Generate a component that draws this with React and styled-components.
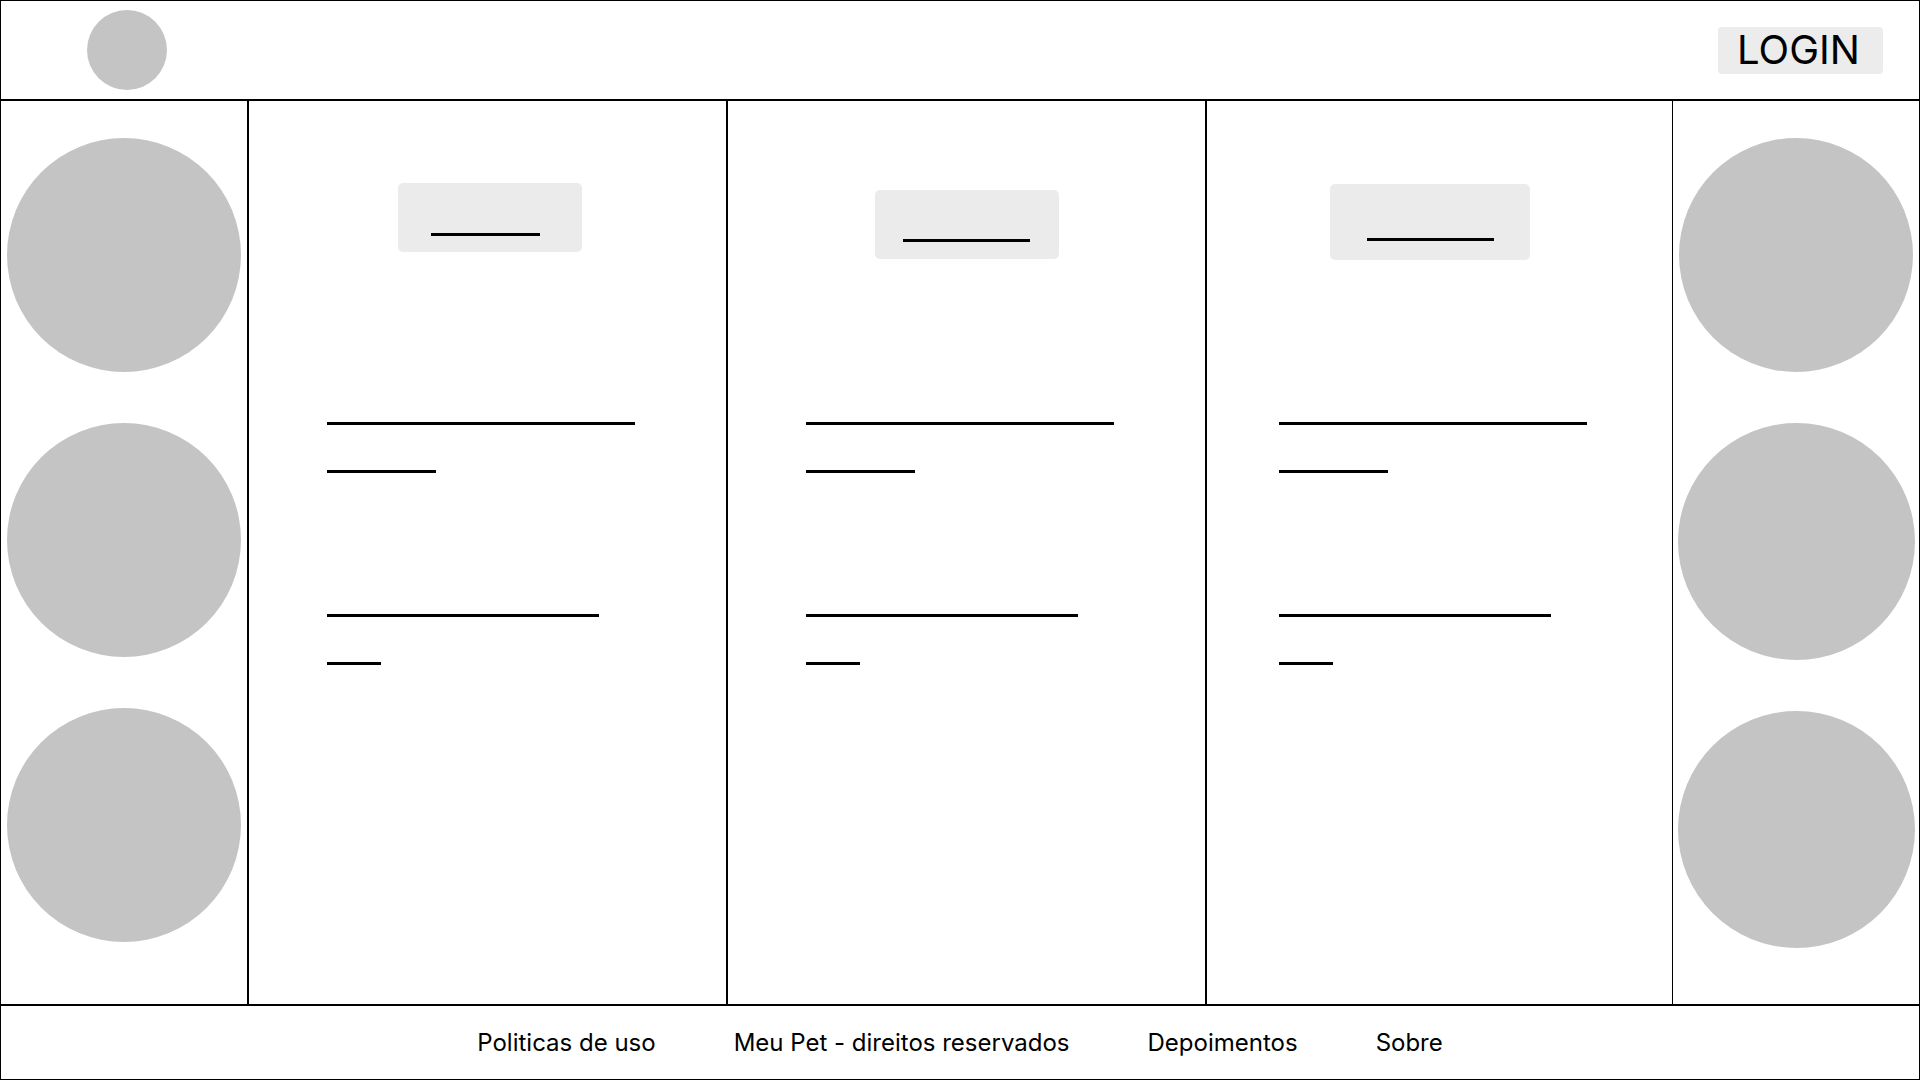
import React from "react";
import styled, { createGlobalStyle } from "styled-components";

const Global = createGlobalStyle`
  * { box-sizing: border-box; }
  html, body { margin: 0; padding: 0; background: #ffffff; }
  body { font-family: Inter, "Noto Sans", sans-serif; color: #000; }
`;

const Page = styled.div`
  width: 1920px;
  height: 1080px;
  border: 1px solid #000;
  display: flex;
  flex-direction: column;
  background: #fff;
`;

const Header = styled.header`
  height: 100px;
  flex: none;
  border-bottom: 2px solid #000;
  display: flex;
  align-items: center;
  justify-content: space-between;
  padding: 0 36px 0 86px;
`;

const Logo = styled.div`
  width: 80px;
  height: 80px;
  border-radius: 50%;
  background: #c4c4c4;
`;

const LoginButton = styled.button`
  width: 165px;
  height: 47px;
  border: none;
  border-radius: 4px;
  background: #ececec;
  font-family: Inter, sans-serif;
  font-size: 40px;
  font-weight: 400;
  color: #000;
  display: flex;
  align-items: center;
  justify-content: center;
  padding: 0 4px 0 0;
  line-height: 1;
`;

const Main = styled.main`
  flex: 1;
  display: grid;
  grid-template-columns: 248px 479px 479px 466px 1fr;
  min-height: 0;
`;

const Side = styled.aside`
  display: flex;
  flex-direction: column;
  align-items: center;
  gap: 51px;
  padding-top: 37px;
  border-right: ${(p) => (p.$last ? "none" : "2px solid #000")};
`;

const Bubble = styled.div`
  width: ${(p) => p.$size}px;
  height: ${(p) => p.$size}px;
  border-radius: 50%;
  background: #c4c4c4;
  flex: none;
`;

const Card = styled.section`
  display: flex;
  flex-direction: column;
  border-right: ${(p) => p.$border}px solid #000;
`;

const ButtonArea = styled.div`
  height: 321px;
  flex: none;
`;

const CardButton = styled.div`
  margin-top: ${(p) => p.$top}px;
  margin-left: ${(p) => p.$left}px;
  width: ${(p) => p.$w}px;
  height: ${(p) => p.$h}px;
  background: #ebebeb;
  border-radius: 5px;
  padding-top: ${(p) => p.$lineTop}px;
  padding-left: ${(p) => p.$lineLeft}px;
`;

const ButtonLabel = styled.div`
  width: ${(p) => p.$w}px;
  height: 3px;
  background: #000;
`;

const Lines = styled.div`
  display: flex;
  flex-direction: column;
  gap: 45px;
  padding-left: ${(p) => p.$left}px;
  margin-top: ${(p) => p.$mt || 0}px;
`;

const Line = styled.div`
  width: ${(p) => p.$w}px;
  height: 3px;
  background: #000;
`;

const Footer = styled.footer`
  height: 75px;
  flex: none;
  border-top: 2px solid #000;
  display: flex;
  align-items: center;
  justify-content: center;
  gap: 78px;
`;

const FooterLink = styled.span`
  font-family: Inter, sans-serif;
  font-size: 24px;
  font-weight: 400;
  color: #000;
  white-space: nowrap;
`;

const cards = [
  { border: 2, top: 82, left: 149, w: 184, h: 69, lineTop: 50, lineLeft: 33, lineW: 109, textLeft: 78 },
  { border: 2, top: 89, left: 147, w: 184, h: 69, lineTop: 49, lineLeft: 28, lineW: 127, textLeft: 78 },
  { border: 1, top: 83, left: 123, w: 200, h: 76, lineTop: 54, lineLeft: 37, lineW: 127, textLeft: 72 },
];

export default function App() {
  return (
    <>
      <Global />
      <Page>
        <Header>
          <Logo />
          <LoginButton>LOGIN</LoginButton>
        </Header>
        <Main>
          <Side>
            <Bubble $size={234} />
            <Bubble $size={234} />
            <Bubble $size={234} />
          </Side>
          {cards.map((c, i) => (
            <Card key={i} $border={c.border}>
              <ButtonArea>
                <CardButton $top={c.top} $left={c.left} $w={c.w} $h={c.h} $lineTop={c.lineTop} $lineLeft={c.lineLeft}>
                  <ButtonLabel $w={c.lineW} />
                </CardButton>
              </ButtonArea>
              <Lines $left={c.textLeft}>
                <Line $w={308} />
                <Line $w={109} />
              </Lines>
              <Lines $left={c.textLeft} $mt={141}>
                <Line $w={272} />
                <Line $w={54} />
              </Lines>
            </Card>
          ))}
          <Side $last>
            <Bubble $size={234} />
            <Bubble $size={237} />
            <Bubble $size={237} />
          </Side>
        </Main>
        <Footer>
          <FooterLink>Politicas de uso</FooterLink>
          <FooterLink>Meu Pet - direitos reservados</FooterLink>
          <FooterLink>Depoimentos</FooterLink>
          <FooterLink>Sobre</FooterLink>
        </Footer>
      </Page>
    </>
  );
}
